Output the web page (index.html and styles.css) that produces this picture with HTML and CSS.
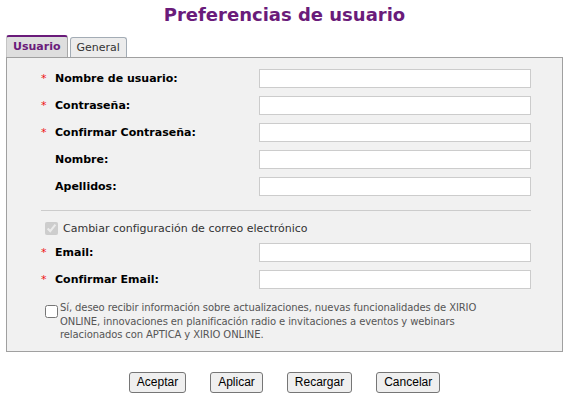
FILE: index.html
```html
<!DOCTYPE html>
<html lang="es">
<head>
<meta charset="utf-8">
<title>Preferencias de usuario</title>
<link rel="stylesheet" href="styles.css">
</head>
<body>
<div class="page">
  <h1 class="title">Preferencias de usuario</h1>
  <div class="tabs">
    <div class="tab tab-active">Usuario</div>
    <div class="tab">General</div>
  </div>
  <div class="panel">
    <div class="rows">
      <div class="row"><span class="star">*</span><label class="label">Nombre de usuario:</label><input class="field" type="text"></div>
      <div class="row"><span class="star">*</span><label class="label">Contraseña:</label><input class="field" type="password"></div>
      <div class="row"><span class="star">*</span><label class="label">Confirmar Contraseña:</label><input class="field" type="password"></div>
      <div class="row"><span class="star"></span><label class="label">Nombre:</label><input class="field" type="text"></div>
      <div class="row"><span class="star"></span><label class="label">Apellidos:</label><input class="field" type="text"></div>
    </div>
    <hr class="sep">
    <label class="check-row"><input class="check" type="checkbox" checked disabled><span>Cambiar configuración de correo electrónico</span></label>
    <div class="rows rows-email">
      <div class="row"><span class="star">*</span><label class="label">Email:</label><input class="field" type="text"></div>
      <div class="row"><span class="star">*</span><label class="label">Confirmar Email:</label><input class="field" type="text"></div>
    </div>
    <label class="consent"><input class="check check-consent" type="checkbox"><span class="consent-text">Sí, deseo recibir información sobre actualizaciones, nuevas funcionalidades de XIRIO ONLINE, innovaciones en planificación radio e invitaciones a eventos y webinars relacionados con APTICA y XIRIO ONLINE.</span></label>
  </div>
  <div class="buttons">
    <button class="btn" type="button">Aceptar</button>
    <button class="btn" type="button">Aplicar</button>
    <button class="btn" type="button">Recargar</button>
    <button class="btn" type="button">Cancelar</button>
  </div>
</div>
</body>
</html>
```
FILE: styles.css
```css
body {
  margin: 0;
  background: #ffffff;
  font-family: "DejaVu Sans", Verdana, sans-serif;
}

.page {
  width: 557px;
  margin-left: 6px;
}

.title {
  margin: 0;
  padding-top: 4px;
  height: 22px;
  line-height: 22px;
  font-size: 18px;
  font-weight: bold;
  color: #6a1b7a;
  text-align: center;
}

.tabs {
  display: flex;
  align-items: flex-end;
  gap: 2px;
  margin-top: 9px;
  height: 22px;
}

.tab {
  height: 19px;
  line-height: 19px;
  padding: 0 6px;
  font-size: 11px;
  color: #333333;
  background: #ececec;
  border: 1px solid #a3acb5;
  border-bottom: 0;
  border-radius: 3px 3px 0 0;
}

.tab-active {
  height: 20px;
  line-height: 20px;
  border-top: 2px solid #6a1b7a;
  border-left: 1px solid #c4c4c4;
  border-right: 1px solid #a8a8a8;
  background: #dedede;
  color: #6a1b7a;
  font-weight: bold;
}

.panel {
  border: 1px solid #a0a0a0;
  background: #f1f1f1;
  padding: 11px 0 9px 34px;
}

.rows {
  display: flex;
  flex-direction: column;
  gap: 8px;
}

.row {
  display: flex;
  align-items: center;
  height: 19px;
}

.star {
  width: 14px;
  font-size: 11px;
  color: #ee1111;
}

.label {
  width: 204px;
  font-size: 11px;
  font-weight: bold;
  color: #000000;
}

.field {
  box-sizing: border-box;
  width: 272px;
  height: 19px;
  margin: 0;
  padding: 0 3px;
  border: 1px solid #cccccc;
  background: #ffffff;
  font-size: 11px;
}

.sep {
  width: 490px;
  margin: 14px 0 0 0;
  height: 0;
  border: 0;
  border-top: 1px solid #cccccc;
}

.check-row {
  display: flex;
  align-items: center;
  height: 13px;
  margin-top: 11px;
  font-size: 11px;
  color: #333333;
}

.check {
  width: 13px;
  height: 13px;
  margin: 0 5px 0 4px;
}

.rows-email {
  margin-top: 8px;
}

.consent {
  display: flex;
  align-items: flex-start;
  margin-top: 12px;
}

.check-consent {
  margin: 4px 2px 0 4px;
}

.consent-text {
  width: 434px;
  font-size: 10px;
  line-height: 13.5px;
  letter-spacing: -0.1px;
  color: #555555;
}

.buttons {
  display: flex;
  justify-content: center;
  gap: 24px;
  margin-top: 20px;
}

.btn {
  height: 21px;
  padding: 0 7px;
  font-family: "Liberation Sans", Arial, sans-serif;
  font-size: 12px;
  color: #000000;
  background: #efefef;
  border: 1px solid #767676;
  border-radius: 3px;
}
```
